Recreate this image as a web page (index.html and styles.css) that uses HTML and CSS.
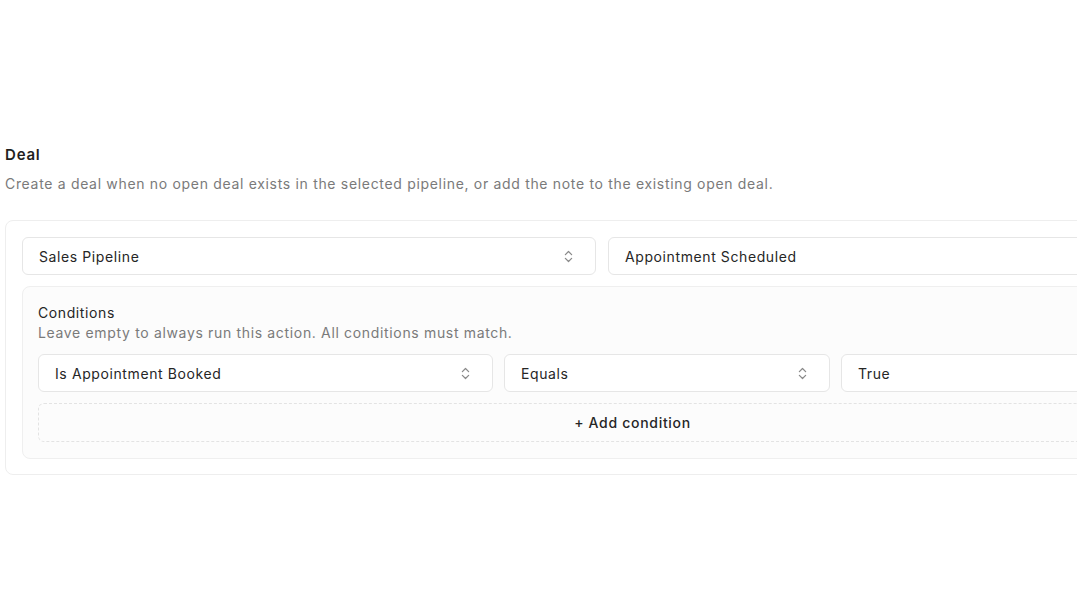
FILE: index.html
```html
<!DOCTYPE html>
<html lang="en">
<head>
  <meta charset="UTF-8" />
  <meta name="viewport" content="width=device-width, initial-scale=1.0" />
  <title>Deal action</title>
  <link rel="stylesheet" href="styles.css">
</head>
<body>
  <section class="action">
    <h2 class="action-title">Deal</h2>
    <p class="action-desc">Create a deal when no open deal exists in the selected pipeline, or add the note to the existing open deal.</p>

    <div class="card">
      <div class="pipeline-row">
        <div class="select">
          <span>Sales Pipeline</span>
          <svg class="chev" viewBox="0 0 24 24"><path d="m7 15 5 5 5-5"/><path d="m7 9 5-5 5 5"/></svg>
        </div>
        <div class="select">
          <span>Appointment Scheduled</span>
        </div>
      </div>

      <div class="conditions">
        <div class="cond-title">Conditions</div>
        <div class="cond-desc">Leave empty to always run this action. All conditions must match.</div>

        <div class="cond-row">
          <div class="select">
            <span>Is Appointment Booked</span>
            <svg class="chev" viewBox="0 0 24 24"><path d="m7 15 5 5 5-5"/><path d="m7 9 5-5 5 5"/></svg>
          </div>
          <div class="select">
            <span>Equals</span>
            <svg class="chev" viewBox="0 0 24 24"><path d="m7 15 5 5 5-5"/><path d="m7 9 5-5 5 5"/></svg>
          </div>
          <div class="select">
            <span>True</span>
          </div>
        </div>

        <button class="add-btn">+ Add condition</button>
      </div>
    </div>
  </section>
</body>
</html>
```

FILE: styles.css
```css
body {
  margin: 0;
  padding: 0 0 0 5px;
  font-family: Inter, "Noto Sans", Arial, sans-serif;
  color: #1f1f1f;
  background: #fff;
  overflow: hidden;
  letter-spacing: 0.6px;
}

.action {
  width: 1255px;
  padding-top: 145px;
}

.action-title {
  margin: 0;
  font-size: 15px;
  font-weight: 600;
  line-height: 20px;
  letter-spacing: 0.8px;
}

.action-desc {
  margin: 9px 0 0;
  font-size: 14px;
  line-height: 20px;
  color: #7a7a7a;
  letter-spacing: 0.68px;
}

.card {
  margin-top: 26px;
  border: 1px solid #eeeeee;
  border-radius: 8px;
  padding: 16px 16px 15px;
  background: #fff;
}

.pipeline-row {
  display: grid;
  grid-template-columns: 574px 1fr;
  gap: 12px;
}

.select {
  display: flex;
  align-items: center;
  justify-content: space-between;
  height: 38px;
  box-sizing: border-box;
  padding: 0 19px 0 16px;
  border: 1px solid #e6e6e6;
  border-radius: 6px;
  background: #fff;
  font-size: 14px;
  color: #262626;
}

.chev {
  width: 15px;
  height: 15px;
  fill: none;
  stroke: #8a8a8a;
  stroke-width: 2;
  stroke-linecap: round;
  stroke-linejoin: round;
}

.conditions {
  margin-top: 11px;
  border: 1px solid #efefef;
  border-radius: 8px;
  padding: 16px 15px 16px;
  background: #fcfcfc;
}

.cond-title {
  font-size: 14px;
  line-height: 20px;
  color: #262626;
}

.cond-desc {
  font-size: 14px;
  line-height: 20px;
  color: #7a7a7a;
  letter-spacing: 0.66px;
}

.cond-row {
  margin-top: 11px;
  display: grid;
  grid-template-columns: 455px 326px 1fr;
  gap: 11px;
}

.add-btn {
  display: block;
  width: 100%;
  height: 39px;
  margin-top: 11px;
  border: 1px dashed #e3e3e3;
  border-radius: 6px;
  background: transparent;
  font-family: inherit;
  font-size: 14px;
  font-weight: 500;
  letter-spacing: 0.7px;
  color: #262626;
}
```
